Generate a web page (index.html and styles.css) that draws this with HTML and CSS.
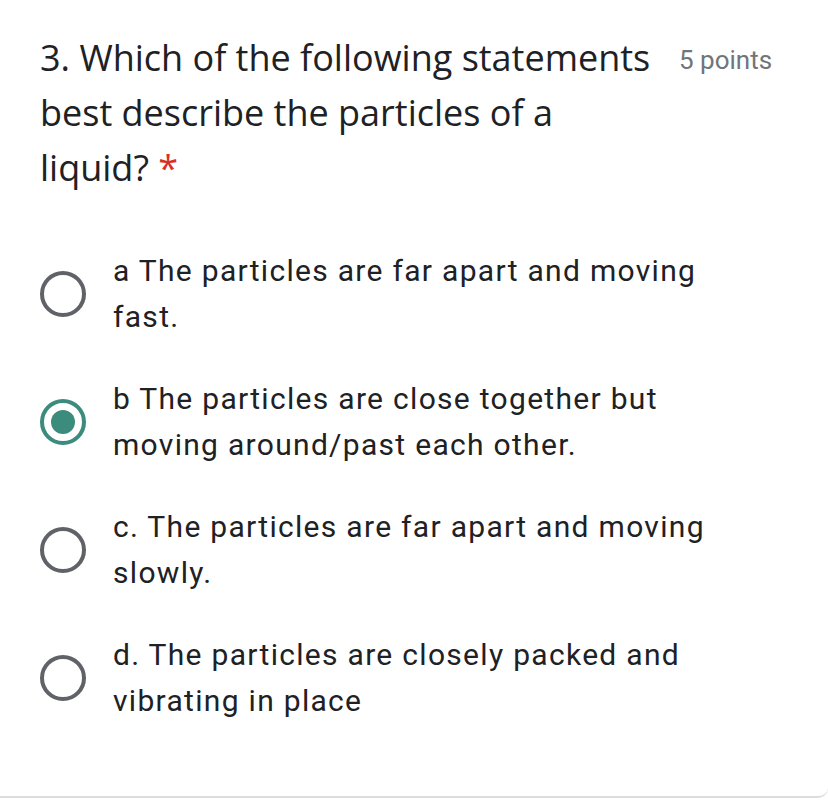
FILE: index.html
```html
<!DOCTYPE html>
<html>
<head>
<meta charset="utf-8">
<link rel="stylesheet" href="styles.css">
</head>
<body>
<div class="card">
  <div class="header">
    <div class="title">3. Which of the following statements best describe the particles of a liquid? <span class="req">*</span></div>
    <div class="points">5 points</div>
  </div>
  <div class="options">
    <div class="option">
      <span class="radio"></span>
      <div class="label">a The particles are far apart and moving fast.</div>
    </div>
    <div class="option">
      <span class="radio checked"></span>
      <div class="label">b The particles are close together but moving around/past each other.</div>
    </div>
    <div class="option">
      <span class="radio"></span>
      <div class="label">c. The particles are far apart and moving slowly.</div>
    </div>
    <div class="option">
      <span class="radio"></span>
      <div class="label">d. The particles are closely packed and vibrating in place</div>
    </div>
  </div>
</div>
</body>
</html>
```

FILE: styles.css
```css
html, body {
  margin: 0;
  padding: 0;
  background: #ffffff;
}
.card {
  box-sizing: border-box;
  width: 828px;
  height: 798px;
  background: #ffffff;
  border-bottom: 2px solid #dadce0;
  border-bottom-right-radius: 10px;
  padding: 30px 0 0 40px;
}
.header {
  display: flex;
  align-items: flex-start;
}
.title {
  font-family: "Open Sans", sans-serif;
  font-size: 36px;
  line-height: 55px;
  color: #202124;
  width: 625px;
}
.req {
  color: #d93025;
}
.points {
  font-family: Roboto, sans-serif;
  font-size: 26px;
  line-height: 55px;
  padding-top: 3px;
  color: #70757a;
  margin-left: 14px;
  white-space: nowrap;
}
.options {
  margin-top: 53px;
  display: flex;
  flex-direction: column;
  gap: 36px;
}
.option {
  display: flex;
  align-items: center;
}
.radio {
  box-sizing: border-box;
  width: 46px;
  height: 46px;
  border: 4px solid #5f6368;
  border-radius: 50%;
  flex: none;
  margin-right: 27px;
  display: flex;
  align-items: center;
  justify-content: center;
}
.radio.checked {
  border-color: #3b8c7d;
}
.radio.checked::after {
  content: "";
  width: 24px;
  height: 24px;
  border-radius: 50%;
  background: #3b8c7d;
}
.label {
  font-family: Roboto, sans-serif;
  font-size: 30px;
  letter-spacing: 1.3px;
  line-height: 46px;
  color: #202124;
  width: 620px;
}
```
